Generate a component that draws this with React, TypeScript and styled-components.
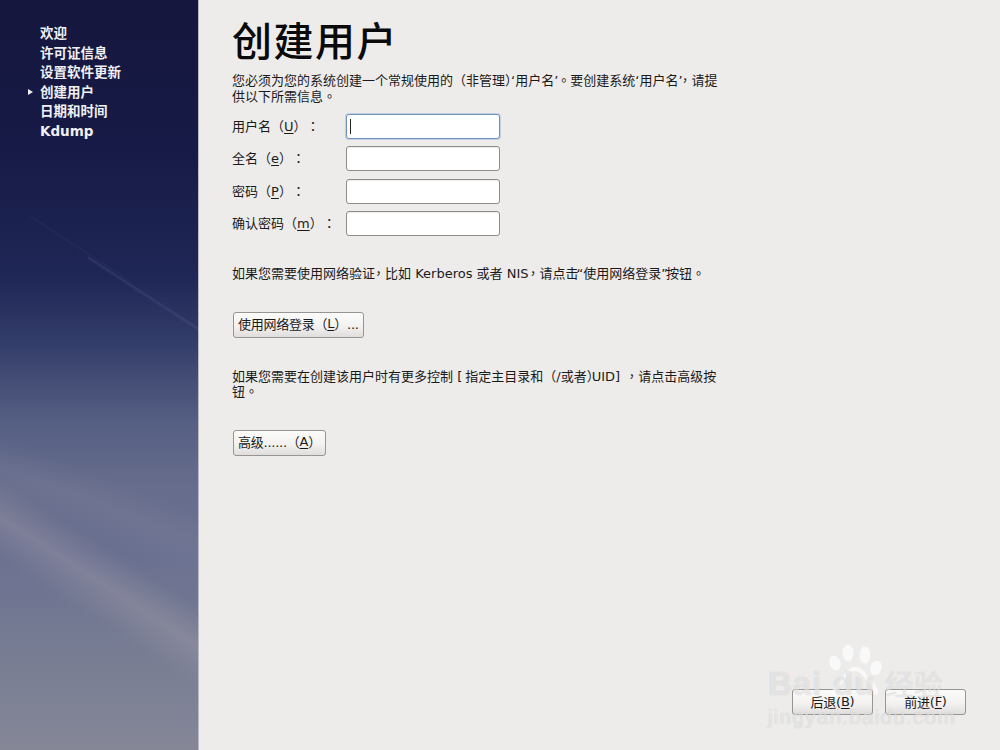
import React from 'react'
import styled, { createGlobalStyle } from 'styled-components'

const steps = ['欢迎', '许可证信息', '设置软件更新', '创建用户', '日期和时间', 'Kdump']
const currentStep = '创建用户'

const fields = [
  { label: '用户名', key: 'U', focused: true },
  { label: '全名', key: 'e' },
  { label: '密码', key: 'P' },
  { label: '确认密码', key: 'm' },
]

const App: React.FC = () => {
  return (
    <>
      <GlobalStyle />
      <Screen>
        <Sidebar>
          <StepList>
            {steps.map((step) => (
              <Step key={step} $current={step === currentStep}>
                {step}
              </Step>
            ))}
          </StepList>
        </Sidebar>

        <Main>
          <Content>
            <Title>创建用户</Title>
            <Intro>
              您必须为您的系统创建一个常规使用的（非管理）<Kern $by={-7} />‘用户名’<Kern $by={-1} /><Punct>。</Punct>要创建系统‘用户名’<Kern $by={-4} /><Punct>，</Punct>请提
              <br />
              供以下所需信息<Punct>。</Punct>
            </Intro>

            <Form>
              {fields.map((field) => (
                <FormRow key={field.key}>
                  <FieldLabel>
                    {field.label}（<u>{field.key}</u>）<Punct>：</Punct>
                  </FieldLabel>
                  <TextInput $focused={field.focused}>{field.focused && <Caret />}</TextInput>
                </FormRow>
              ))}
            </Form>

            <NetworkNote>
              如果您需要使用网络验证<Kern $by={-3} /><Punct>，</Punct>比如 Kerberos 或者 NIS<Kern $by={-2} /><Punct>，</Punct>请点击<Kern $by={-2} />“使用网络登录”<Kern $by={-2} />按钮<Punct>。</Punct>
            </NetworkNote>
            <PushButton>
              使用网络登录（<u>L</u>）...
            </PushButton>

            <AdvancedNote>
              如果您需要在创建该用户时有更多控制 [<Kern $by={-1} /> 指定主目录和（/或者）<Kern $by={-8} />UID]<Kern $by={1} /> <Punct>，</Punct>请点击高级按
              <br />
              钮<Punct>。</Punct>
            </AdvancedNote>
            <PushButton>
              高级......（<u>A</u>）
            </PushButton>
          </Content>

          <NavBar>
            <NavButton>
              后退(<u>B</u>)
            </NavButton>
            <NavButton>
              前进(<u>F</u>)
            </NavButton>
          </NavBar>
        </Main>

        <Watermark>
          <WatermarkLogo>
            <WatermarkBai>Bai</WatermarkBai>
            <PawSlot>
              <svg width="60" height="62" viewBox="0 0 60 62" fill="#fff">
                <ellipse cx="9" cy="20" rx="5.5" ry="7.5" transform="rotate(-20 9 20)" />
                <ellipse cx="22" cy="10" rx="5.5" ry="8.5" />
                <ellipse cx="39" cy="12" rx="5.5" ry="8.5" />
                <ellipse cx="50" cy="25" rx="5.5" ry="7.5" transform="rotate(20 50 25)" />
                <path d="M8 50c1-8 7-10 11-16 3-5 6-8 10-8s8 3 11 8c4 5 10 9 10 16" fill="none" stroke="#fff" strokeWidth="4" strokeLinecap="round" />
              </svg>
            </PawSlot>
            <WatermarkDu>du</WatermarkDu>
            <WatermarkCn>经验</WatermarkCn>
          </WatermarkLogo>
          <WatermarkUrl>jingyan.baidu.com</WatermarkUrl>
        </Watermark>
      </Screen>
    </>
  )
}

const GlobalStyle = createGlobalStyle`
  html, body {
    margin: 0;
    padding: 0;
    background: #edeceb;
  }

  * {
    box-sizing: border-box;
  }

  u {
    text-underline-offset: 2px;
  }
`

const uiFont = `"DejaVu Sans", "Noto Sans CJK SC", sans-serif`

const Screen = styled.div`
  position: relative;
  display: flex;
  width: 1000px;
  height: 750px;
  overflow: hidden;
  font-family: ${uiFont};
  font-size: 13px;
  color: #1a1a1a;
  text-spacing-trim: space-all;
  background: #edeceb;
`

const Sidebar = styled.aside`
  flex: 0 0 199px;
  padding-top: 24px;
  border-right: 1px solid #b9b9c4;
  background:
    linear-gradient(213deg, transparent 47.2%, rgba(125, 145, 195, 0.16) 48%, rgba(125, 145, 195, 0.05) 49.4%, transparent 50%) right 246px / 110px 100px no-repeat,
    linear-gradient(213deg, transparent 47.2%, rgba(125, 145, 195, 0.05) 48%, transparent 50%) 30px 211px / 100px 80px no-repeat,
    linear-gradient(213deg, transparent 69%, rgba(175, 165, 175, 0.3) 73.5%, rgba(175, 165, 175, 0.02) 78%, transparent 79%) no-repeat,
    linear-gradient(201deg, transparent 62%, rgba(150, 150, 175, 0.14) 65.7%, transparent 70%) no-repeat,
    linear-gradient(180deg, #15173e 0%, #171a46 20%, #1f2756 37%, #343e6a 46%, #555f83 56%, #676d8c 65%, #6a7090 74%, #747a92 84%, #858797 100%);
`

const StepList = styled.ul`
  margin: 0;
  padding: 0;
  list-style: none;
`

const Step = styled.li<{ $current?: boolean }>`
  position: relative;
  height: 19.6px;
  padding-left: 40px;
  font-size: 13.5px;
  font-weight: 700;
  line-height: 19.6px;
  color: #f0f0f2;

  &::before {
    content: '';
    display: ${(p) => (p.$current ? 'block' : 'none')};
    position: absolute;
    left: 28px;
    top: 6px;
    border-left: 5px solid #f0f0f2;
    border-top: 3.5px solid transparent;
    border-bottom: 3.5px solid transparent;
  }
`

const Main = styled.main`
  flex: 1;
  display: flex;
  flex-direction: column;
  justify-content: space-between;
  padding: 16px 34px 35px 33px;
`

const Content = styled.div`
  display: flex;
  flex-direction: column;
  align-items: flex-start;
`

const Title = styled.h1`
  margin: 0;
  font-size: 40px;
  font-weight: 500;
  line-height: 52px;
  letter-spacing: 1.5px;
  color: #0a0a0a;
`

const Intro = styled.p`
  margin: 5px 0 0;
  line-height: 15.5px;
`

const Kern = styled.span<{ $by: number }>`
  margin-left: ${(p) => p.$by}px;
`

// the reference centres full-width punctuation in its cell, the TC face does too
const Punct = styled.span`
  font-family: "Noto Sans CJK TC", sans-serif;
  line-height: 0;
`

const Form = styled.div`
  display: flex;
  flex-direction: column;
  gap: 7.33px;
  margin-top: 10px;
`

const FormRow = styled.div`
  display: flex;
  align-items: center;
  height: 25px;
`

const FieldLabel = styled.label`
  flex: 0 0 114px;
  padding-bottom: 2px;
`

const TextInput = styled.div<{ $focused?: boolean }>`
  display: flex;
  align-items: center;
  width: 154px;
  height: 25px;
  padding-left: 3px;
  background: #fff;
  border: 1px solid ${(p) => (p.$focused ? '#6f93bd' : '#8f8d89')};
  border-radius: 3px;
  box-shadow: ${(p) => (p.$focused ? '0 0 0 1px rgba(140, 175, 215, 0.45)' : 'inset 0 1px 1px rgba(0, 0, 0, 0.08)')};
`

const Caret = styled.span`
  width: 1px;
  height: 15px;
  background: #222;
`

const NetworkNote = styled.p`
  margin: 30px 0 0;
  line-height: 16px;
`

const AdvancedNote = styled.p`
  margin: 31px 0 0;
  line-height: 15.5px;
`

const PushButton = styled.button`
  display: inline-flex;
  align-items: center;
  height: 26px;
  margin: 30px 0 0 1px;
  padding: 0 4px 2px;
  font-family: inherit;
  font-size: 13px;
  letter-spacing: -0.25px;
  color: #1a1a1a;
  background: linear-gradient(180deg, #fbfbfa 0%, #f3f2f1 55%, #dfdedc 100%);
  border: 1px solid #979592;
  border-radius: 3px;
`

const NavButton = styled(PushButton)`
  justify-content: center;
  width: 81px;
  margin: 0;
`

const NavBar = styled.div`
  display: flex;
  justify-content: flex-end;
  gap: 12px;
`

const Watermark = styled.div`
  position: absolute;
  left: 768px;
  top: 643px;
  width: 190px;
  color: rgba(255, 255, 255, 0.62);
  text-shadow: 0 0 1px rgba(0, 0, 0, 0.22);
  pointer-events: none;
`

const WatermarkLogo = styled.div`
  position: relative;
  height: 62px;
  font-family: "Liberation Sans", sans-serif;
  font-size: 33px;
  font-weight: 700;
  line-height: 46px;
  letter-spacing: 1px;
`

const WatermarkBai = styled.span`
  position: absolute;
  left: 0;
  top: 18px;
`

const PawSlot = styled.div`
  position: absolute;
  left: 58px;
  top: 0;
  opacity: 0.7;
`

const WatermarkDu = styled.span`
  position: absolute;
  left: 65px;
  top: 18px;
`

const WatermarkCn = styled.span`
  position: absolute;
  left: 117px;
  top: 23px;
  font-family: "Noto Sans CJK SC", sans-serif;
  font-size: 29px;
  font-weight: 400;
  line-height: 34px;
  letter-spacing: 0;
`

const WatermarkUrl = styled.div`
  font-family: "Liberation Sans", sans-serif;
  font-size: 21px;
  line-height: 24px;
  letter-spacing: 1.1px;
`

export default App
